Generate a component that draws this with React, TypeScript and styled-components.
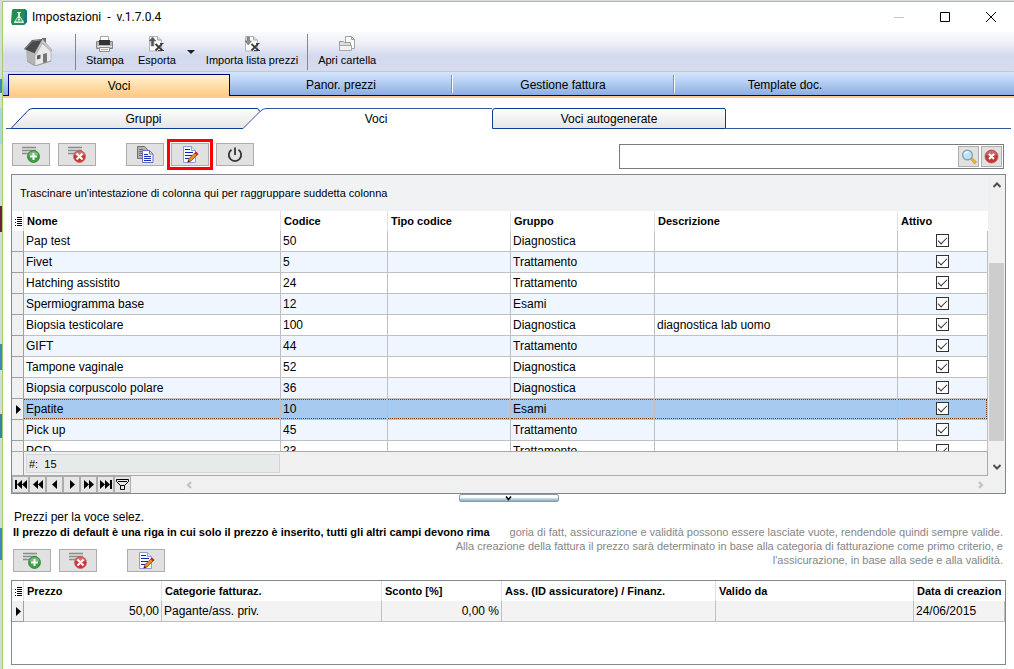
import React from "react";
import styled, { createGlobalStyle, css } from "styled-components";

const GlobalStyle = createGlobalStyle`
  *, *::before, *::after { box-sizing: border-box; }
  body {
    margin: 0;
    font-family: "Liberation Sans", Arial, sans-serif;
    font-size: 12px;
    color: #000;
    background: #fff;
  }
  button, input { font: inherit; color: inherit; }
  button { padding: 0; margin: 0; }
  svg { display: block; flex: none; }
`;

const Desktop = styled.div`
  min-height: 100vh;
  display: flex;
  padding: 1px 0 0 2px;
  background: linear-gradient(
      #d9dade 0 79px, #3f87bd 79px 93px, #d9dade 93px 108px, #a9d6ea 108px 144px,
      #d9dade 144px 206px, #6b2140 206px 232px, #d9dade 232px 344px, #3f87bd 344px 370px,
      #d9dade 370px 414px, #3a80b0 414px 438px, #d9dade 438px 528px, #3f87bd 528px 560px, #d9dade 560px
    );
`;

const Window = styled.main`
  flex: 1;
  min-width: 0;
  display: flex;
  flex-direction: column;
  border: solid #9fce63;
  border-width: 1px 0 0 1px;
  background: #fff;
`;

/* ---------- title bar ---------- */

const TitleBar = styled.header`
  height: 30px;
  display: flex;
  align-items: center;
  padding-left: 8px;
`;

const Title = styled.h1`
  flex: 1;
  margin: 0 0 0 5px;
  font: 400 12px Roboto, "Open Sans", sans-serif;
  white-space: pre;
`;

const CaptionButton = styled.button`
  width: 46px;
  height: 29px;
  display: grid;
  place-items: center;
  border: 0;
  background: none;
`;

/* ---------- main toolbar ---------- */

const Toolbar = styled.div`
  height: 40px;
  display: flex;
  align-items: center;
  padding-left: 16px;
  border-bottom: 1px solid #c3c7d6;
  background: linear-gradient(#fafbfd, #eceff7 30%, #d4daed 60%, #d6dcee);
`;

const HomeButton = styled.button`
  width: 54px;
  height: 36px;
  padding-left: 5px;
  border: 0;
  background: none;
`;

const Separator = styled.span`
  width: 1px;
  height: 36px;
  margin: 0 3px 0 2px;
  background: #85878f;
`;

const ToolButton = styled.button`
  height: 36px;
  display: flex;
  flex-direction: column;
  align-items: center;
  gap: 1px;
  padding: 2px 7px 0;
  border: 0;
  background: none;
  font-size: 11px;
  line-height: 14px;
  white-space: nowrap;
`;

const DropButton = styled.button`
  width: 16px;
  height: 36px;
  display: grid;
  place-items: center;
  border: 0;
  background: none;
`;

/* ---------- section tabs ---------- */

const SectionTabs = styled.nav`
  height: 24px;
  display: flex;
  padding-left: 5px;
  border-bottom: 1px solid #00007b;
  background: linear-gradient(#d6e6fb, #bcd4f5 35%, #8baee2);
`;

const SectionTab = styled.button<{ $active?: boolean }>`
  position: relative;
  width: 222px;
  border: 0;
  background: none;
  padding-top: 3px;
  line-height: 20px;

  ${(p) =>
    p.$active
      ? css`
          margin: 2px 0 -1px;
          padding-top: 1px;
          border: solid #00007b;
          border-width: 1px 1px 0;
          background: linear-gradient(#fff1d4, #ffdfa8 50%, #ffc987);
        `
      : css`
          &:not(:last-child)::after {
            content: "";
            position: absolute;
            inset: 3px -1px 2px auto;
            width: 2px;
            background: linear-gradient(90deg, #6f93d6 50%, #fff 50%);
          }
        `}
`;

const ActiveStripe = styled.div`
  height: 2px;
  background: #ffcb8b;
`;

/* ---------- page tabs ---------- */

const PageTabs = styled.nav`
  height: 31px;
  display: flex;
  align-items: flex-end;
  margin: 0 3px;
`;

const TabLine = styled.span<{ $fill?: boolean }>`
  flex: ${(p) => (p.$fill ? "1" : "none")};
  width: 5px;
  height: 21px;
  border-bottom: 1px solid #2f5aa0;
`;

const PageTab = styled.button<{ $kind: "slanted" | "active" | "plain" }>`
  height: 21px;
  border: 0 solid #0b3d91;
  border-top-width: 1px;
  background: #fff;
  line-height: 20px;

  ${(p) =>
    p.$kind === "slanted" &&
    css`
      width: 210px;
      padding-left: 11px;
      border-bottom-width: 1px;
      background: linear-gradient(#fdfdfd, #e6e6e6);
    `}
  ${(p) =>
    p.$kind === "active" &&
    css`
      width: 226px;
      padding-right: 6px;
      border-color: #2f5aa0;
    `}
  ${(p) =>
    p.$kind === "plain" &&
    css`
      width: 234px;
      border-width: 1px;
      border-radius: 3px 2px 0 0;
      background: linear-gradient(#fdfdfd, #e6e6e6);
    `}
`;

/* ---------- action bars ---------- */

const ActionBar = styled.div`
  display: flex;
  align-items: flex-start;
  padding: 14px 10px 5px 9px;
`;

const ActionGroup = styled.div`
  display: flex;
  gap: 8px;
  margin-right: 30px;
`;

const EditGroup = styled(ActionGroup)`
  gap: 7px;
  margin-right: auto;
`;

const IconButton = styled.button<{ $marked?: boolean }>`
  width: 38px;
  height: 23px;
  display: grid;
  place-items: center;
  border: 1px solid #adadad;
  background: #e1e1e1;
  ${(p) =>
    p.$marked &&
    css`
      outline: 3px solid #f00;
      outline-offset: 1px;
    `}
`;

const SearchBox = styled.div`
  flex: 0 1 385px;
  height: 25px;
  display: flex;
  align-items: center;
  gap: 2px;
  margin-top: 1px;
  padding-right: 1px;
  border: 1px solid #7a7a7a;
  background: #fff;
`;

const SearchInput = styled.input`
  flex: 1;
  min-width: 0;
  height: 21px;
  border: 0;
  outline: 0;
  background: none;
`;

const SearchButton = styled(IconButton)`
  width: 21px;
  height: 21px;
`;

/* ---------- grids ---------- */

const GridPanel = styled.section<{ $grow?: boolean }>`
  margin: 0 8px;
  border: 1px solid #828790;
  background: #fff;
  ${(p) =>
    p.$grow
      ? css`
          flex: 1;
          margin-bottom: 4px;
          overflow: hidden;
        `
      : css`
          display: flex;
          background: #f0f0f0;
        `}
`;

const GridMain = styled.div`
  flex: 1;
  min-width: 0;
`;

const GroupBar = styled.div`
  height: 36px;
  margin-right: 1px;
  padding-left: 8px;
  background: #f1f2f4;
  font-size: 11px;
  line-height: 36px;
`;

const TableClip = styled.div`
  height: 240px;
  margin-right: 1px;
  overflow: hidden;
  background: #fff;
`;

const Table = styled.table`
  width: 100%;
  table-layout: fixed;
  border-spacing: 0;
`;

const HeadCell = styled.th`
  height: 20px;
  padding: 0 3px;
  border-right: 1px solid #e2e2e2;
  background: #fff;
  font-size: 11px;
  line-height: 20px;
  text-align: left;
  white-space: nowrap;
  overflow: hidden;
  &:first-child { padding: 0 0 0 3px; }
  &:last-child { border-right: 0; }
`;

const Row = styled.tr<{ $tone: string }>`
  background: ${(p) => p.$tone};
`;

const Cell = styled.td<{ $align?: string; $focus?: boolean }>`
  position: relative;
  height: 21px;
  padding: 0 2px;
  border: solid #c0c0c0;
  border-width: 0 1px 1px 0;
  line-height: 20px;
  text-align: ${(p) => p.$align ?? "left"};
  white-space: nowrap;
  overflow: hidden;

  ${(p) =>
    p.$focus &&
    css`
      &::after {
        content: "";
        position: absolute;
        inset: 0 -1px 0 0;
        border: dotted #6b3f1a;
        border-width: 1px 0;
      }
      &:last-child::after {
        right: 0;
        border-right-width: 1px;
      }
    `}
`;

const MarkerCell = styled(Cell)`
  padding: 0 0 0 4px;
  border-color: #a0a0a0;
  background: #f0f0f0;
`;

const Check = styled.input`
  appearance: none;
  display: block;
  position: relative;
  width: 13px;
  height: 13px;
  margin: 0 auto 1px;
  border: 1px solid #333;
  background: #fff;
  &:checked::before {
    content: "";
    position: absolute;
    left: 1px;
    top: 2px;
    width: 9px;
    height: 5px;
    border: solid #333;
    border-width: 0 0 1px 1px;
    transform: rotate(-45deg);
  }
`;

const Summary = styled.div`
  height: 25px;
  display: flex;
  margin-right: 1px;
  border: solid #a9a9a9;
  border-width: 1px 1px 1px 0;
`;

const SummaryGutter = styled.span`
  width: 12px;
  border-right: 1px solid #a0a0a0;
`;

const SummaryValue = styled.output`
  width: 254px;
  margin: 2px;
  padding-left: 2px;
  border: 1px solid #d3d6d6;
  background: #e6eaea;
  font-size: 11px;
  line-height: 18px;
  white-space: pre;
`;

const NavRow = styled.div`
  height: 17px;
  display: flex;
  align-items: center;
`;

const NavButton = styled.button`
  width: 17px;
  height: 17px;
  display: grid;
  place-items: center;
  border: 1px solid #adadad;
  background: #e6e6e6;
`;

const HorizontalScroll = styled.div`
  flex: 1;
  display: flex;
  justify-content: space-between;
  padding: 0 4px 0 54px;
`;

const VerticalScroll = styled.div`
  width: 16px;
  display: flex;
  flex-direction: column;
  align-items: center;
  padding: 6px 0 22px;
`;

const ScrollArrow = styled.button`
  display: grid;
  place-items: center;
  width: 8px;
  height: 8px;
  border: 0;
  background: none;
`;

const ScrollTrack = styled.div`
  flex: 1;
  align-self: stretch;
  padding: 74px 1px 0 0;
`;

const ScrollThumb = styled.div`
  height: 178px;
  background: #cdcdcd;
`;

const Splitter = styled.button`
  align-self: center;
  width: 100px;
  height: 8px;
  display: grid;
  place-items: center;
  border: 1px solid #8d9aa8;
  border-radius: 2px;
  background: linear-gradient(#fff 40%, #b9dcec 60%, #93a9b8);
`;

/* ---------- price section ---------- */

/* The intro and the right-aligned hint share one grid area. */
const PriceHeader = styled.div`
  display: grid;
  padding: 8px 11px 8px 10px;
`;

const PriceIntro = styled.div`
  grid-area: 1 / 1;
  justify-self: start;
`;

const IntroLine = styled.p<{ $strong?: boolean }>`
  margin: 0;
  padding-left: ${(p) => (p.$strong ? "0" : "1px")};
  font-size: ${(p) => (p.$strong ? "11px" : "12px")};
  font-weight: ${(p) => (p.$strong ? 700 : 400)};
  line-height: 15px;
  white-space: nowrap;
`;

const PriceActions = styled.div`
  display: flex;
  margin-top: 9px;
`;

const Hint = styled.p`
  grid-area: 1 / 1;
  justify-self: end;
  margin: 15px 0 0;
  color: #868686;
  font-size: 11px;
  line-height: 14px;
  text-align: right;
  white-space: nowrap;
`;

/* ---------- icons ---------- */

const AppIcon = () => (
  <svg width="16" height="16" viewBox="0 0 16 16">
    <path d="M2 0h12l2 2v11l-3 3H1l-1-3L1 1z" fill="#1e9150" />
    <path d="M14 0l2 2v11l-3 3z" fill="#1c6f96" />
    <path d="M6 3h4v1H9v3l4 6v1H3v-1l4-6V4H6z" fill="#fff" opacity=".85" />
    <path d="M6.500 9h3l2 3.500h-7z" fill="#4aa86c" />
    <path d="M7 9.500h2v2H7z" fill="#e8f6ec" />
  </svg>
);

const HomeIcon = () => (
  <svg width="29" height="29" viewBox="0 0 29 29">
    <path d="M18 1h4v7h-4z" fill="#6e6e6e" />
    <path d="M2 12l9 5v12L3 24z" fill="#b4b4b4" />
    <path d="M11 17l7-11 9 7v11l-16 5z" fill="#e9e9e9" stroke="#a7a7a7" strokeWidth=".6" />
    <path d="M0 12L8 3l11-1-8 14.500z" fill="#4a4a4a" />
    <path d="M1 12L8.500 4l8-1" fill="none" stroke="#8b8b8b" />
    <path d="M18.500 2L28 13l-1 1.500L18.500 6 12 17.500l-1.500-1z" fill="#c9c9c9" stroke="#8d8d8d" strokeWidth=".5" />
    <path d="M19 17l4-1v9l-4 1.200z" fill="#777" />
    <path d="M13 18.500l3.500-1v4l-3.500 1z" fill="#5c5c5c" />
    <path d="M3 24l8 5 16-5" fill="none" stroke="#9a9a9a" />
  </svg>
);

const PrinterIcon = () => (
  <svg width="17" height="16" viewBox="0 0 17 16">
    <path d="M4.500.5h8V6h-8z" fill="#fff" stroke="#a5a5a5" />
    <path d="M.5 5.500h3v3h10v-3h3v7H.5z" fill="#b6b6b6" stroke="#858585" />
    <path d="M3 4h11v5H3z" fill="#333" />
    <path d="M1 10h15v1H1z" fill="#e9e9e9" />
    <path d="M3.500 11.500h10v4h-10z" fill="#f5f5f5" stroke="#8d8d8d" />
    <path d="M5 13.500h7" stroke="#aaa" />
  </svg>
);

const SheetIcon = ({ down }: { down?: boolean }) => (
  <svg width="17" height="16" viewBox="0 0 17 16">
    <path d="M1.500.5h8l4 3.500v11h-12z" fill="#fbfbfb" stroke="#b4b4b4" />
    <path d="M9.500.5V4h4" fill="#ddd" stroke="#a8a8a8" />
    <path d="M7.500 8l7 6.500M14 8l-6.500 6.500" stroke="#3b3b3b" strokeWidth="1.800" />
    <path d="M10 14.500h6M12 7.500h3.500" stroke="#3b3b3b" />
    <path
      d={down ? "M3 1h2.500v4h2L4.300 9 1 5h2z" : "M4.500 1l3.500 4H5.800v5H3.200V5H1z"}
      fill={down ? "#8e8e8e" : "#555"}
      stroke="#6d6d6d"
      strokeWidth=".6"
    />
  </svg>
);

const FolderIcon = () => (
  <svg width="17" height="16" viewBox="0 0 17 16">
    <path d="M6.500.5h6l3 3v9h-9z" fill="#fbfbfb" stroke="#a2a2a2" />
    <path d="M12.500.5v3h3" fill="none" stroke="#a2a2a2" />
    <path d="M.5 5.500h4l1 1h6v8H.5z" fill="#dcdcdc" stroke="#9a9a9a" />
    <path d="M.5 9.500h12v5H.5z" fill="#f2f2f2" stroke="#a6a6a6" />
  </svg>
);

const ListIcon = ({ remove }: { remove?: boolean }) => (
  <svg width="18" height="17" viewBox="0 0 18 17">
    <path d="M0 1.500h14M0 4.500h14M0 7.500h8" stroke="#8c8c8c" strokeWidth="1.600" />
    <circle cx="11.500" cy="10.500" r="6" fill={remove ? "#cf3434" : "#3ba143"} stroke={remove ? "#b86a6a" : "#2e7f37"} strokeWidth=".8" />
    <path d="M6.500 9a5.200 5.200 0 0 1 10 0q-5 2-10 0z" fill="#fff" opacity=".28" />
    {remove ? (
      <path d="M8.500 7.500l6 6M14.500 7.500l-6 6" stroke="#fff" strokeWidth="2" />
    ) : (
      <path d="M11.500 7v7M8 10.500h7" stroke="#fff" strokeWidth="2" />
    )}
  </svg>
);

const CopyIcon = () => (
  <svg width="17" height="17" viewBox="0 0 17 17">
    <path d="M.5.5h7l3 3v9H.5z" fill="#b5b2ac" stroke="#716e68" />
    <path d="M2 3.500h4M2 5.500h5M2 7.500h5M2 9.500h5" stroke="#716e68" />
    <path d="M5.500 4.500h7l3.500 3.500v8.500H5.500z" fill="#f6f8ff" stroke="#6673b8" />
    <path d="M12.500 4.500V8H16" fill="none" stroke="#6673b8" />
    <path d="M7 8.500h4M7 10.500h7M7 12.500h7M7 14.500h7" stroke="#1b2fb5" />
  </svg>
);

const EditIcon = () => (
  <svg width="17" height="17" viewBox="0 0 17 17">
    <path d="M1.500.5h8l4 4v12h-12z" fill="#f8faff" stroke="#8f9bd8" />
    <path d="M9.500.5v4h4" fill="#dfe5fb" stroke="#8f9bd8" />
    <path d="M3 3.500h5M3 6.500h8M3 9.500h7M3 12.500h4" stroke="#1324b4" />
    <path d="M6 16l1-3.500 6.500-6 2 2-6.500 6.500z" fill="#ee8b22" stroke="#7d4a16" strokeWidth=".8" />
    <path d="M14 5.500l2.500 2.500-1.500 1.500L12.500 7z" fill="#b8261c" />
    <path d="M5.500 16.500l1-2.500 1.500 1.500z" fill="#222" />
  </svg>
);

const PowerIcon = () => (
  <svg width="16" height="16" viewBox="0 0 16 16" fill="none" stroke="#333" strokeWidth="1.800">
    <path d="M4.500 2.800a6.200 6.200 0 1 0 7 0" />
    <path d="M8 .5v7.500" />
  </svg>
);

const MagnifierIcon = () => (
  <svg width="16" height="16" viewBox="0 0 16 16">
    <path d="M9.500 10l1.500-1.500 4.500 4.500-2 2z" fill="#f0b13a" stroke="#b98522" strokeWidth=".6" />
    <circle cx="6.500" cy="6" r="4.800" fill="#b9e4fa" stroke="#8ba0b3" strokeWidth="1.400" />
    <path d="M3.500 5.500a3.200 3.200 0 0 1 4-2.500" fill="none" stroke="#fff" strokeWidth="1.300" />
  </svg>
);

const ClearIcon = () => (
  <svg width="15" height="15" viewBox="0 0 15 15">
    <circle cx="7.500" cy="7.500" r="6.500" fill="#cb3232" stroke="#b05a5a" strokeWidth=".8" />
    <path d="M2 6a5.700 5.700 0 0 1 11 0q-5.500 2-11 0z" fill="#fff" opacity=".25" />
    <path d="M5 5l5 5M10 5l-5 5" stroke="#fff" strokeWidth="2.200" />
  </svg>
);

const ColumnsIcon = () => (
  <svg width="7" height="9" viewBox="0 0 7 9" shapeRendering="crispEdges">
    <path d="M2 .5h5M2 2.500h5M2 4.500h5M2 6.500h5M2 8.500h5" stroke="#000" />
    <path d="M0 2.500h1M0 5.500h1M0 8.500h1" stroke="#000" />
  </svg>
);

const RowPointer = () => (
  <svg width="5" height="9" viewBox="0 0 5 9">
    <path d="M0 0l5 4.500L0 9z" />
  </svg>
);

const Chevron = ({ d, color }: { d: string; color: string }) => (
  <svg width="8" height="8" viewBox="0 0 8 8" fill="none" stroke={color} strokeWidth="2">
    <path d={d} />
  </svg>
);

const navShapes: [string, string][] = [
  ["Primo", "M0 1h2v9H0zM7 1v9L2 5.500zM12 1v9L7 5.500z"],
  ["Pagina precedente", "M6 1v9L1 5.500zM11 1v9L6 5.500z"],
  ["Precedente", "M8 1v9L3 5.500z"],
  ["Successivo", "M4 1v9l5-4.500z"],
  ["Pagina successiva", "M1 1v9l5-4.500zM6 1v9l5-4.500z"],
  ["Ultimo", "M10 1h2v9h-2zM0 1v9l5-4.500zM5 1v9l5-4.500z"],
];

/* ---------- data ---------- */

const items: [string, string, string, string][] = [
  ["Pap test", "50", "Diagnostica", ""],
  ["Fivet", "5", "Trattamento", ""],
  ["Hatching assistito", "24", "Trattamento", ""],
  ["Spermiogramma base", "12", "Esami", ""],
  ["Biopsia testicolare", "100", "Diagnostica", "diagnostica lab uomo"],
  ["GIFT", "44", "Trattamento", ""],
  ["Tampone vaginale", "52", "Diagnostica", ""],
  ["Biopsia corpuscolo polare", "36", "Diagnostica", ""],
  ["Epatite", "10", "Esami", ""],
  ["Pick up", "45", "Trattamento", ""],
  ["PCD", "23", "Trattamento", ""],
];
const selected = "Epatite";

const Columns = ({ widths }: { widths: (number | null)[] }) => (
  <colgroup>
    {widths.map((w, i) => (
      <col key={i} width={w ?? undefined} />
    ))}
  </colgroup>
);

export default function App() {
  return (
    <>
      <GlobalStyle />
      <Desktop>
        <Window>
          <TitleBar>
            <AppIcon />
            <Title>{"Impostazioni  -  v.1.7.0.4"}</Title>
            <CaptionButton aria-label="Riduci">
              <svg width="10" height="10"><path d="M0 5.500h10" stroke="#c4c4c4" /></svg>
            </CaptionButton>
            <CaptionButton aria-label="Ingrandisci">
              <svg width="10" height="10"><path d="M.5.5h9v9h-9z" fill="none" stroke="#000" /></svg>
            </CaptionButton>
            <CaptionButton aria-label="Chiudi">
              <svg width="10" height="10"><path d="M0 0l10 10M10 0L0 10" stroke="#000" /></svg>
            </CaptionButton>
          </TitleBar>

          <Toolbar>
            <HomeButton aria-label="Home"><HomeIcon /></HomeButton>
            <Separator />
            <ToolButton><PrinterIcon />Stampa</ToolButton>
            <ToolButton><SheetIcon />Esporta</ToolButton>
            <DropButton aria-label="Opzioni di esportazione">
              <svg width="8" height="4"><path d="M0 0h8L4 4z" fill="#222" /></svg>
            </DropButton>
            <ToolButton><SheetIcon down />Importa lista prezzi</ToolButton>
            <Separator />
            <ToolButton><FolderIcon />Apri cartella</ToolButton>
          </Toolbar>

          <SectionTabs>
            <SectionTab $active>Voci</SectionTab>
            <SectionTab>Panor. prezzi</SectionTab>
            <SectionTab>Gestione fattura</SectionTab>
            <SectionTab>Template doc.</SectionTab>
          </SectionTabs>
          <ActiveStripe />

          <PageTabs>
            <TabLine />
            <svg width="22" height="21" viewBox="0 0 22 21">
              <defs>
                <linearGradient id="tabFill" x1="0" y1="0" x2="0" y2="1">
                  <stop offset="0" stopColor="#fdfdfd" />
                  <stop offset="1" stopColor="#e6e6e6" />
                </linearGradient>
              </defs>
              <path d="M0 20.500L17 2.500Q19 .5 22 .5V20.500z" fill="url(#tabFill)" />
              <path d="M0 20.500L17 2.500Q19 .5 22 .5M0 20.500H22" fill="none" stroke="#0b3d91" />
            </svg>
            <PageTab $kind="slanted">Gruppi</PageTab>
            <svg width="23" height="21" viewBox="0 0 23 21">
              <path d="M0 .5H14Q16 .5 16.500 3.500L0 20.500z" fill="url(#tabFill)" />
              <path d="M0 .5H14Q16 .5 16.500 3.500" fill="none" stroke="#0b3d91" />
              <path d="M0 20.500L17 3.500Q20 .5 23 .5" fill="none" stroke="#2f5aa0" />
            </svg>
            <PageTab $kind="active">Voci</PageTab>
            <PageTab $kind="plain">Voci autogenerate</PageTab>
            <TabLine $fill />
          </PageTabs>

          <ActionBar>
            <ActionGroup>
              <IconButton aria-label="Aggiungi voce"><ListIcon /></IconButton>
              <IconButton aria-label="Elimina voce"><ListIcon remove /></IconButton>
            </ActionGroup>
            <EditGroup>
              <IconButton aria-label="Duplica voce"><CopyIcon /></IconButton>
              <IconButton aria-label="Modifica voce" $marked><EditIcon /></IconButton>
              <IconButton aria-label="Attiva o disattiva"><PowerIcon /></IconButton>
            </EditGroup>
            <SearchBox>
              <SearchInput type="text" aria-label="Cerca" />
              <SearchButton aria-label="Avvia ricerca"><MagnifierIcon /></SearchButton>
              <SearchButton aria-label="Cancella ricerca"><ClearIcon /></SearchButton>
            </SearchBox>
          </ActionBar>

          <GridPanel>
            <GridMain>
              <GroupBar>Trascinare un'intestazione di colonna qui per raggruppare suddetta colonna</GroupBar>
              <TableClip>
                <Table>
                  <Columns widths={[12, 257, 107, 123, 144, null, 90]} />
                  <thead>
                    <tr>
                      <HeadCell aria-label="Colonne"><ColumnsIcon /></HeadCell>
                      <HeadCell>Nome</HeadCell>
                      <HeadCell>Codice</HeadCell>
                      <HeadCell>Tipo codice</HeadCell>
                      <HeadCell>Gruppo</HeadCell>
                      <HeadCell>Descrizione</HeadCell>
                      <HeadCell>Attivo</HeadCell>
                    </tr>
                  </thead>
                  <tbody>
                    {items.map(([name, code, group, note], i) => {
                      const focus = name === selected;
                      return (
                        <Row key={name} $tone={focus ? "#a6caf0" : i % 2 ? "#eff6ff" : "#fff"}>
                          <MarkerCell>{focus && <RowPointer />}</MarkerCell>
                          <Cell $focus={focus}>{name}</Cell>
                          <Cell $focus={focus}>{code}</Cell>
                          <Cell $focus={focus} />
                          <Cell $focus={focus}>{group}</Cell>
                          <Cell $focus={focus}>{note}</Cell>
                          <Cell $focus={focus}>
                            <Check type="checkbox" defaultChecked aria-label={`${name} attivo`} />
                          </Cell>
                        </Row>
                      );
                    })}
                  </tbody>
                </Table>
              </TableClip>
              <Summary>
                <SummaryGutter />
                <SummaryValue>{"#:  15"}</SummaryValue>
              </Summary>
              <NavRow>
                {navShapes.map(([label, d]) => (
                  <NavButton key={label} aria-label={label}>
                    <svg width="12" height="11" viewBox="0 0 12 11"><path d={d} /></svg>
                  </NavButton>
                ))}
                <NavButton aria-label="Filtro">
                  <svg width="13" height="11" viewBox="0 0 13 11" fill="none" stroke="#000">
                    <path d="M.5.5h12v2L8.500 6.500v4h-4v-4L.5 2.500zM2 2.500h9M4.500 6.500h4" />
                  </svg>
                </NavButton>
                <HorizontalScroll>
                  <ScrollArrow aria-label="Scorri a sinistra"><Chevron d="M6 1L3 4l3 3" color="#bfbfbf" /></ScrollArrow>
                  <ScrollArrow aria-label="Scorri a destra"><Chevron d="M2 1l3 3-3 3" color="#bfbfbf" /></ScrollArrow>
                </HorizontalScroll>
              </NavRow>
            </GridMain>
            <VerticalScroll>
              <ScrollArrow aria-label="Scorri in alto"><Chevron d="M.5 6L4 2.500 7.500 6" color="#505050" /></ScrollArrow>
              <ScrollTrack><ScrollThumb /></ScrollTrack>
              <ScrollArrow aria-label="Scorri in basso"><Chevron d="M.5 2L4 5.500 7.500 2" color="#505050" /></ScrollArrow>
            </VerticalScroll>
          </GridPanel>

          <Splitter aria-label="Comprimi pannello">
            <svg width="7" height="5" fill="none" stroke="#000" strokeWidth="1.500"><path d="M1 .5l2.500 3L6 .5" /></svg>
          </Splitter>

          <PriceHeader>
            <PriceIntro>
              <IntroLine>Prezzi per la voce selez.</IntroLine>
              <IntroLine $strong>
                Il prezzo di default è una riga in cui solo il prezzo è inserito, tutti gli altri campi devono rima
              </IntroLine>
              <PriceActions>
                <ActionGroup>
                  <IconButton aria-label="Aggiungi prezzo"><ListIcon /></IconButton>
                  <IconButton aria-label="Elimina prezzo"><ListIcon remove /></IconButton>
                </ActionGroup>
                <IconButton aria-label="Modifica prezzo"><EditIcon /></IconButton>
              </PriceActions>
            </PriceIntro>
            <Hint>
              goria di fatt, assicurazione e validità possono essere lasciate vuote, rendendole quindi sempre valide.
              <br />
              Alla creazione della fattura il prezzo sarà determinato in base alla categoria di fatturazione come primo criterio, e
              <br />
              l'assicurazione, in base alla sede e alla validità.
            </Hint>
          </PriceHeader>

          <GridPanel $grow>
            <Table>
              <Columns widths={[12, 138, 220, 120, 214, null, 91]} />
              <thead>
                <tr>
                  <HeadCell aria-label="Colonne"><ColumnsIcon /></HeadCell>
                  <HeadCell>Prezzo</HeadCell>
                  <HeadCell>Categorie fatturaz.</HeadCell>
                  <HeadCell>Sconto [%]</HeadCell>
                  <HeadCell>Ass. (ID assicuratore) / Finanz.</HeadCell>
                  <HeadCell>Valido da</HeadCell>
                  <HeadCell>Data di creazion</HeadCell>
                </tr>
              </thead>
              <tbody>
                <Row $tone="#f3f3f3">
                  <MarkerCell><RowPointer /></MarkerCell>
                  <Cell $align="right">50,00</Cell>
                  <Cell>Pagante/ass. priv.</Cell>
                  <Cell $align="right">0,00 %</Cell>
                  <Cell />
                  <Cell />
                  <Cell>24/06/2015</Cell>
                </Row>
              </tbody>
            </Table>
          </GridPanel>
        </Window>
      </Desktop>
    </>
  );
}
